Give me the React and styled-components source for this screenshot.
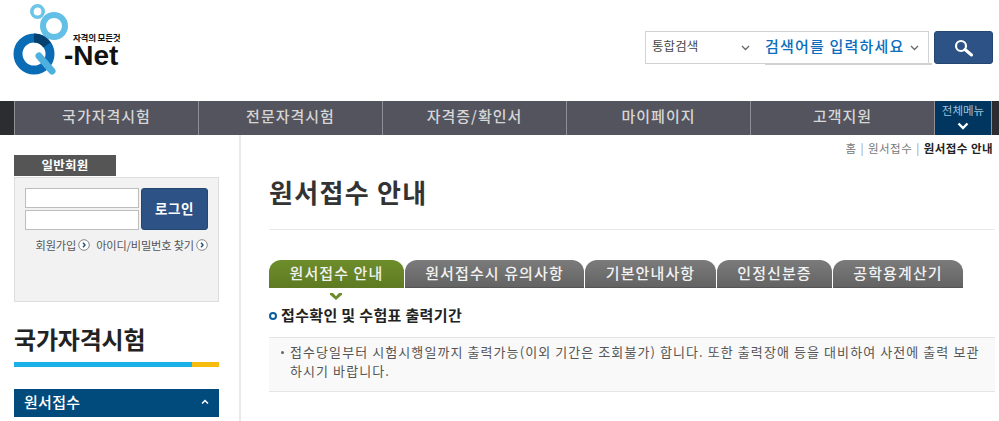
import React from 'react';
import styled, { createGlobalStyle } from 'styled-components';

const GlobalStyle = createGlobalStyle`
html, body {
  margin: 0;
  padding: 0;
  background: #fff;
  overflow: hidden;
}
body {
  font-family: "Noto Sans CJK KR", "Noto Sans", sans-serif;
  color: #333;
}
* { box-sizing: border-box; }
`;

const Page = styled.div`
  width: 999px;
  height: 421px;
  overflow: hidden;
`;

const Header = styled.header`
  height: 101px;
  padding: 31px 6px 0 14px;
  display: flex;
  justify-content: space-between;
  align-items: flex-start;
`;

const LogoWrap = styled.div`
  width: 110px;
  height: 76px;
  margin-top: -27px;
  display: grid;
  grid-template-columns: 50px 1fr;
`;

const LogoText = styled.div`
  padding-top: 28px;
  display: flex;
  flex-direction: column;
  color: #111;
`;

const Slogan = styled.span`
  font-size: 8.5px;
  line-height: 10px;
  font-weight: 700;
  margin-left: 9px;
  white-space: nowrap;
  letter-spacing: -0.2px;
`;

const Brand = styled.span`
  font-family: "Liberation Sans", sans-serif;
  font-size: 28px;
  line-height: 28px;
  font-weight: 700;
  white-space: nowrap;
`;

const Search = styled.form`
  display: flex;
  gap: 5px;
  margin: 0;
`;

const SearchBox = styled.div`
  position: relative;
  width: 284px;
  height: 33px;
  border: 1px solid #d2d2d2;
  display: flex;
  align-items: center;
  padding-left: 6px;
  &::after {
    content: '';
    position: absolute;
    left: 119px;
    right: -4px;
    bottom: -2px;
    height: 2px;
    background: #d2d2d2;
  }
`;

const ScopeLabel = styled.span`
  width: 89px;
  margin-bottom: 4px;
  font-size: 12.5px;
  color: #444;
  letter-spacing: 0.1px;
  white-space: nowrap;
`;

const Chevron = styled.svg`
  width: 9px;
  height: 6px;
  flex: none;
`;

const Keyword = styled.span`
  margin: 0 5px 4px 15px;
  font-size: 15px;
  font-weight: 500;
  color: #0a6ebd;
  letter-spacing: 1.2px;
  white-space: nowrap;
`;

const SearchButton = styled.button`
  width: 59px;
  height: 33px;
  padding: 0;
  border: 1px solid #24466f;
  border-radius: 3px;
  background: #2d5285;
  display: flex;
  align-items: center;
  justify-content: center;
`;

const Nav = styled.nav`
  height: 34px;
  padding: 0 6px 0 14px;
  background: #2c2d31;
  display: flex;
`;

const NavItem = styled.a`
  width: 184px;
  padding-bottom: 5px;
  background: #54545e;
  border-left: 1px solid #8f8f96;
  color: #d6d6d6;
  font-size: 15px;
  font-weight: 500;
  display: flex;
  align-items: center;
  justify-content: center;
  letter-spacing: 1px;
`;

const AllMenu = styled.a`
  width: 58px;
  background: #00365f;
  border: 1px solid #8f8f96;
  border-width: 0 1px;
  color: #9fc4dc;
  font-size: 11.5px;
  line-height: 14px;
  display: flex;
  flex-direction: column;
  align-items: center;
  padding-top: 2px;
  gap: 5px;
  white-space: nowrap;
`;

const Body = styled.div`
  display: flex;
  align-items: stretch;
  height: 286px;
`;

const Sidebar = styled.aside`
  width: 241px;
  padding: 20px 20px 0 14px;
  border-right: 2px solid #e9e9e9;
`;

const MemberTab = styled.div`
  width: 102px;
  height: 21px;
  background: #555;
  color: #fff;
  font-size: 12.5px;
  font-weight: 700;
  line-height: 20px;
  text-align: center;
  letter-spacing: 0.2px;
`;

const LoginBox = styled.div`
  margin-top: 1px;
  height: 125px;
  background: #f2f2f2;
  border: 1px solid #ddd;
  padding: 10px 10px 0;
`;

const LoginRow = styled.div`
  display: flex;
  gap: 2px;
`;

const Inputs = styled.div`
  width: 114px;
  display: flex;
  flex-direction: column;
  gap: 2px;
`;

const Input = styled.input`
  width: 114px;
  height: 20px;
  padding: 0;
  border: 1px solid #bdbdbd;
  background: #fff;
`;

const LoginButton = styled.button`
  width: 67px;
  height: 42px;
  padding: 0 0 2px;
  border: 1px solid #24466f;
  border-radius: 3px;
  background: #2d5285;
  color: #fff;
  font-family: inherit;
  font-size: 13.5px;
  font-weight: 700;
  letter-spacing: 0.5px;
`;

const LoginLinks = styled.div`
  margin-top: 7px;
  display: flex;
  justify-content: flex-end;
  gap: 6px;
`;

const LoginLink = styled.a`
  display: flex;
  align-items: center;
  gap: 2px;
  font-size: 11.2px;
  line-height: 16px;
  color: #555;
  letter-spacing: -0.15px;
  white-space: nowrap;
`;

const Arrow = styled.svg`
  width: 12px;
  height: 12px;
  flex: none;
`;

const SideTitle = styled.h2`
  margin: 21px 0 0;
  font-size: 24px;
  line-height: 32px;
  font-weight: 700;
  color: #222;
  letter-spacing: -0.2px;
`;

const SideRule = styled.div`
  margin-top: 7px;
  height: 5px;
  background: linear-gradient(90deg, #1ab0e8 178px, #f7bc10 178px);
`;

const SideMenu = styled.div`
  margin-top: 22px;
  height: 28px;
  padding: 0 10px 3px;
  background: #004a7c;
  color: #fff;
  font-size: 15px;
  font-weight: 500;
  display: flex;
  align-items: center;
  justify-content: space-between;
  letter-spacing: 0.3px;
`;

const Main = styled.main`
  flex: 1;
  padding: 0 4px 0 28px;
  min-width: 0;
`;

const Breadcrumb = styled.div`
  height: 27px;
  padding: 5px 2px 0 0;
  display: flex;
  justify-content: flex-end;
  gap: 4px;
  font-size: 11.5px;
  line-height: 16px;
  color: #777;
  letter-spacing: 0.45px;
`;

const Crumb = styled.span`
  color: ${(p) => (p.$current ? '#222' : '#777')};
  font-weight: ${(p) => (p.$current ? 700 : 400)};
  &::before {
    content: ${(p) => (p.$first ? 'none' : "'|'")};
    margin-right: 4px;
    color: #999;
    font-weight: 400;
  }
`;

const PageTitle = styled.h1`
  margin: 0;
  height: 68px;
  border-bottom: 1px solid #e8e8e8;
  font-size: 26px;
  line-height: 60px;
  font-weight: 700;
  color: #333;
  letter-spacing: 1.3px;
`;

const Tabs = styled.ul`
  list-style: none;
  margin: 30px 0 0;
  padding: 0;
  display: flex;
  gap: 1px;
`;

const Tab = styled.li`
  position: relative;
  width: ${(p) => p.$w}px;
  height: 28px;
  border-radius: 12px 12px 0 0;
  background: ${(p) =>
    p.$active
      ? 'linear-gradient(#6d8d2c 0, #668426 55%, #5f7a22 100%)'
      : 'linear-gradient(#7b7b7b 0, #6e6e6e 55%, #636363 100%)'};
  border-bottom: 1px solid ${(p) => (p.$active ? '#5f7a22' : '#555')};
  color: #f2f2f2;
  font-size: 15px;
  font-weight: 500;
  line-height: 26px;
  text-align: center;
  white-space: nowrap;
  letter-spacing: 1.1px;
  ${(p) =>
    p.$active &&
    `
    &::after {
      content: '';
      position: absolute;
      left: 61px;
      top: 33px;
      width: 12px;
      height: 7px;
      background: #6d8d2c;
      clip-path: polygon(0 0, 25% 0, 50% 45%, 75% 0, 100% 0, 100% 25%, 50% 100%, 0 25%);
    }
  `}
`;

const SectionTitle = styled.h3`
  margin: 16px 0 0;
  height: 22px;
  display: flex;
  align-items: center;
  gap: 4px;
  font-size: 15px;
  line-height: 22px;
  font-weight: 700;
  color: #222;
  letter-spacing: 0.35px;
`;

const Dot = styled.i`
  width: 8px;
  height: 8px;
  margin-top: 2px;
  border-radius: 50%;
  border: 2px solid #0b5c9e;
  background: #fff;
  flex: none;
`;

const Notice = styled.ul`
  list-style: none;
  margin: 11px 0 0;
  padding: 4px 10px 0 11px;
  height: 55px;
  background: #f9f9f9;
  border-top: 1px solid #e5e5e5;
  border-bottom: 1px solid #e5e5e5;
`;

const NoticeItem = styled.li`
  position: relative;
  padding-left: 10px;
  font-size: 13px;
  line-height: 19px;
  color: #555;
  letter-spacing: 1.08px;
  &::before {
    content: '';
    position: absolute;
    left: 1px;
    top: 9px;
    width: 3px;
    height: 3px;
    border-radius: 50%;
    background: #666;
  }
`;

const ChevronDown = ({ color = '#666' }) => (
  <Chevron viewBox="0 0 9 6">
    <path d="M1 1l3.5 3.5L8 1" fill="none" stroke={color} strokeWidth="1.3" />
  </Chevron>
);

const CircleArrow = () => (
  <Arrow viewBox="0 0 12 12">
    <circle cx="6" cy="6" r="5.3" fill="#fff" stroke="#888" />
    <path d="M5 3.8L7 6 5 8.2" fill="none" stroke="#1d4f80" strokeWidth="1.4" />
  </Arrow>
);

const QLogo = () => (
  <svg width="57" height="76" viewBox="0 0 57 76" style={{ overflow: 'visible' }}>
    <circle cx="23.5" cy="7.5" r="5.7" fill="none" stroke="#6cc4e8" strokeWidth="3.6" />
    <circle cx="40" cy="22" r="11" fill="none" stroke="#62bfe6" strokeWidth="6" />
    <circle cx="20" cy="50" r="16" fill="none" stroke="#0a6cb4" strokeWidth="9" />
    <path d="M20 34a16 16 0 0 1 13 7" fill="none" stroke="#06406f" strokeWidth="9" />
    <path d="M25 52l13 15" stroke="#4db0de" strokeWidth="7" strokeLinecap="round" />
  </svg>
);

const navItems = ['국가자격시험', '전문자격시험', '자격증/확인서', '마이페이지', '고객지원'];

const tabs = [
  { label: '원서접수 안내', w: 135, active: true },
  { label: '원서접수시 유의사항', w: 179 },
  { label: '기본안내사항', w: 131 },
  { label: '인정신분증', w: 115 },
  { label: '공학용계산기', w: 130 },
];

export default function App() {
  return (
    <Page>
      <GlobalStyle />
      <Header>
        <LogoWrap>
          <QLogo />
          <LogoText>
            <Slogan>자격의 모든것</Slogan>
            <Brand>-Net</Brand>
          </LogoText>
        </LogoWrap>
        <Search>
          <SearchBox>
            <ScopeLabel>통합검색</ScopeLabel>
            <ChevronDown />
            <Keyword>검색어를 입력하세요</Keyword>
            <ChevronDown />
          </SearchBox>
          <SearchButton type="button" aria-label="검색">
            <svg width="20" height="18" viewBox="0 0 20 18">
              <circle cx="7" cy="7" r="5" fill="none" stroke="#fff" strokeWidth="2.2" />
              <path d="M11 10.5l6.5 5.5" stroke="#fff" strokeWidth="3" strokeLinecap="round" />
            </svg>
          </SearchButton>
        </Search>
      </Header>
      <Nav>
        {navItems.map((item) => (
          <NavItem key={item}>{item}</NavItem>
        ))}
        <AllMenu>
          전체메뉴
          <svg width="12" height="8" viewBox="0 0 12 8">
            <path d="M1.5 1.5L6 6l4.5-4.5" fill="none" stroke="#fff" strokeWidth="2.4" />
          </svg>
        </AllMenu>
      </Nav>
      <Body>
        <Sidebar>
          <MemberTab>일반회원</MemberTab>
          <LoginBox>
            <LoginRow>
              <Inputs>
                <Input />
                <Input />
              </Inputs>
              <LoginButton type="button">로그인</LoginButton>
            </LoginRow>
            <LoginLinks>
              <LoginLink>회원가입 <CircleArrow /></LoginLink>
              <LoginLink>아이디/비밀번호 찾기 <CircleArrow /></LoginLink>
            </LoginLinks>
          </LoginBox>
          <SideTitle>국가자격시험</SideTitle>
          <SideRule />
          <SideMenu>
            원서접수
            <svg width="8" height="6" viewBox="0 0 8 6">
              <path d="M1 4.5L4 1.5l3 3" fill="none" stroke="#fff" strokeWidth="1.5" />
            </svg>
          </SideMenu>
        </Sidebar>
        <Main>
          <Breadcrumb>
            <Crumb $first>홈</Crumb>
            <Crumb>원서접수</Crumb>
            <Crumb $current>원서접수 안내</Crumb>
          </Breadcrumb>
          <PageTitle>원서접수 안내</PageTitle>
          <Tabs>
            {tabs.map((t) => (
              <Tab key={t.label} $w={t.w} $active={t.active}>{t.label}</Tab>
            ))}
          </Tabs>
          <SectionTitle><Dot />접수확인 및 수험표 출력기간</SectionTitle>
          <Notice>
            <NoticeItem>
              접수당일부터 시험시행일까지 출력가능(이외 기간은 조회불가) 합니다. 또한 출력장애 등을 대비하여 사전에 출력 보관하시기 바랍니다.
            </NoticeItem>
          </Notice>
        </Main>
      </Body>
    </Page>
  );
}
